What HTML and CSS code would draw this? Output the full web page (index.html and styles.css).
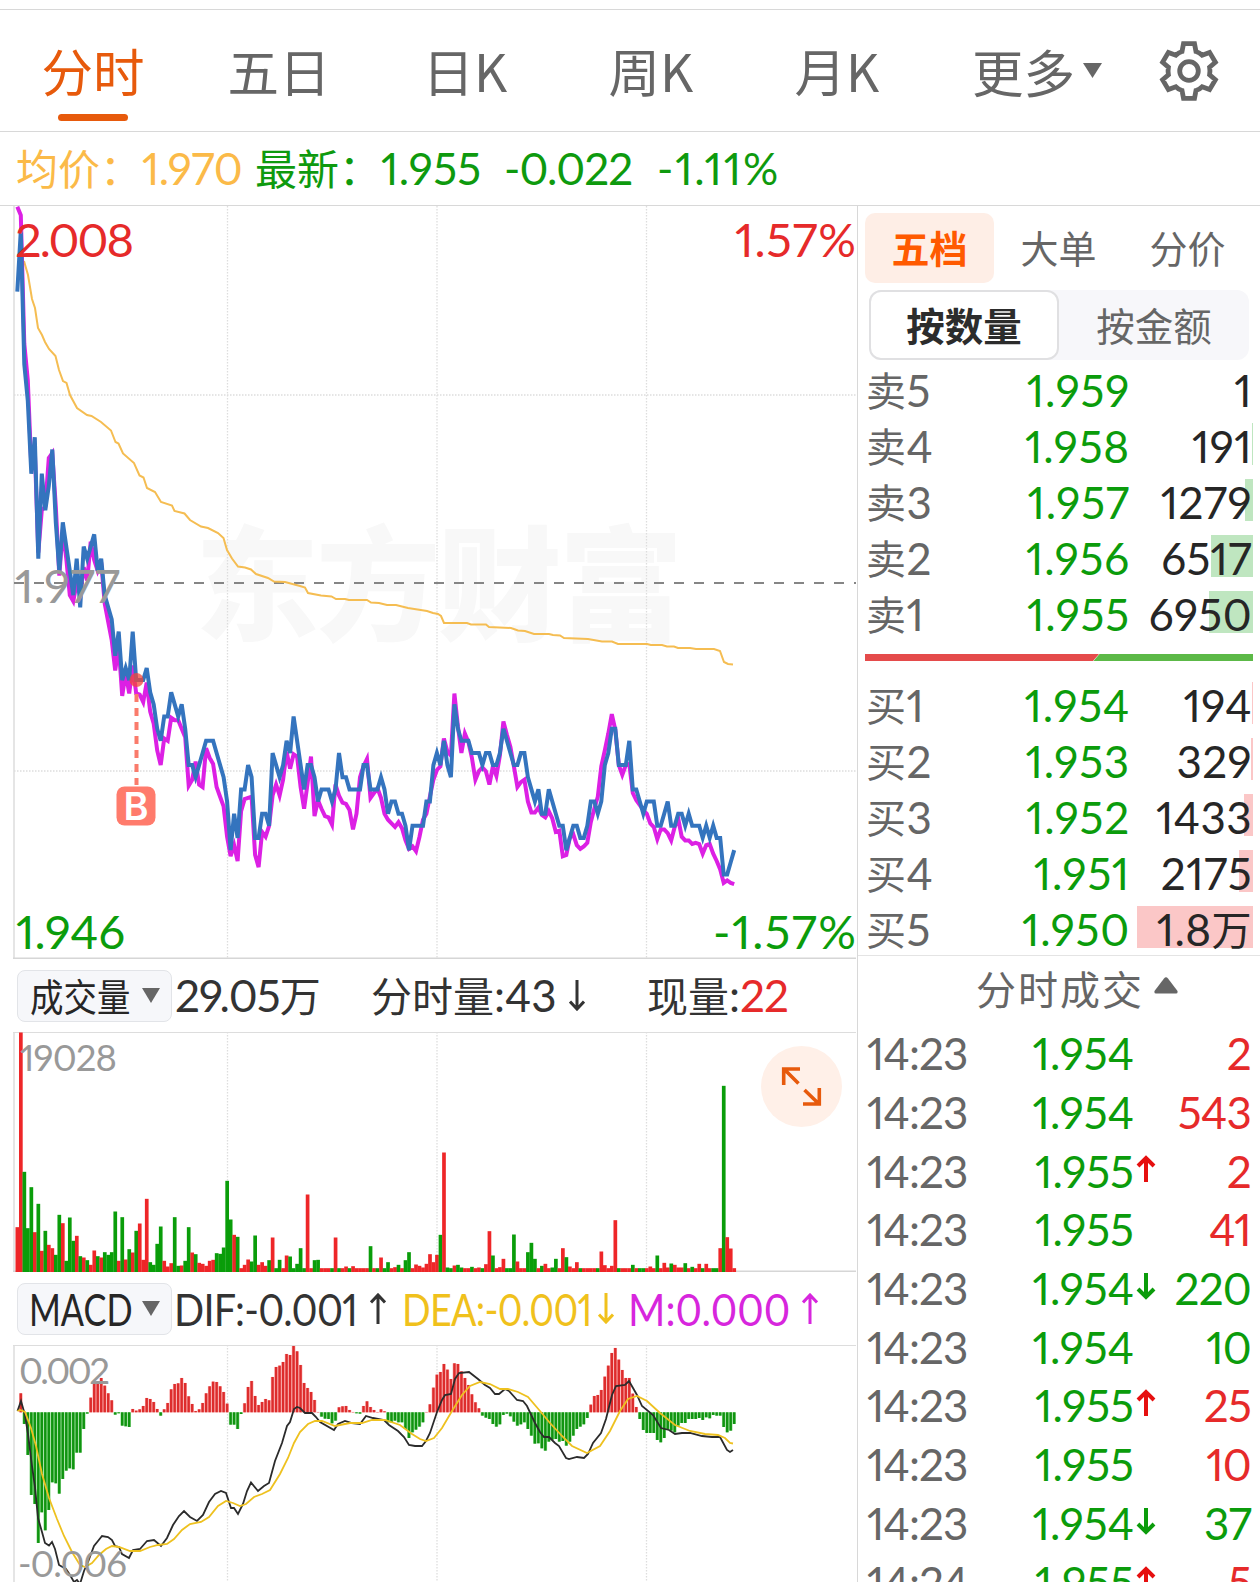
FILE: index.html
```html
<!DOCTYPE html>
<html lang="zh-CN">
<head>
    <meta charset="UTF-8">
    <meta name="viewport" content="width=device-width, initial-scale=1.0">
    <title>分时</title>
    <link rel="stylesheet" href="styles.css">
</head>
<body>
    <nav class="tabs">
        <a class="tab active">分时</a>
        <a class="tab">五日</a>
        <a class="tab">日K</a>
        <a class="tab">周K</a>
        <a class="tab">月K</a>
        <a class="more">更多<svg width="19" height="15"><path d="M0 0H19L9.500 15Z" fill="#666"/></svg></a>
        <svg class="gear" width="60" height="60" viewBox="-30 -30 60 60" fill="none" stroke="#666" stroke-width="4.800">
            <path d="M-5.500 -27.300H5.500L7 -19.500Q10.500 -18.500 13.200 -15.800L20.600 -18.600L26.400 -8.800L20.600 -3.800Q21.300 0 20.600 3.800L26.400 8.800L20.600 18.600L13.200 15.800Q10.500 18.500 7 19.500L5.500 27.300H-5.500L-7 19.500Q-10.500 18.500 -13.200 15.800L-20.600 18.600L-26.400 8.800L-20.600 3.800Q-21.300 0 -20.600 -3.800L-26.400 -8.800L-20.600 -18.600L-13.200 -15.800Q-10.500 -18.500 -7 -19.500Z"/>
            <circle r="9.300"/>
        </svg>
    </nav>

    <div class="quote">
        <span class="avg"><i>均价：</i>1.970</span>
        <span class="last"><i>最新：</i>1.955</span>
        <span class="change">-0.022</span>
        <span class="percent">-1.11%</span>
    </div>

    <div class="main">
        <div class="charts">
            <svg class="chart" width="857" height="753" viewBox="0 206 857 753">
                <text class="watermark" x="195" y="631" textLength="488">东方财富</text>
                <path class="grid" d="M227.500 206V958M437 206V958M646.500 206V958M14 395H856M14 771H856"/>
                <path class="axis" d="M14 206V959"/>
                <path class="axis-bottom" d="M13 958.500H856"/>
                <path class="mid" d="M14 583H856"/>
                <polyline class="avg-line" points="24,261 28,275 32,299 35,308 38,328 42,335 45,342 49,349 55.5,356 59,370 63,381 66.5,383 70,395 77,408 87,415 91.5,416 101,422 111,430.5 115.5,442 118.5,443.5 123,453.5 134,463 139.5,475.5 143.5,477.5 147,488 155,492 161,502 172,505.5 174.5,511 184.5,513.5 190,520 201,526.5 208,528 218,533 223.5,538 227,550 232,558.5 238,566.5 245,567.5 251,569.5 256,574 268,578 274,581.5 285,582 300,586 305,587.5 308,593 321,595.5 331.5,596.5 336,599 345,599 349,600 367,600 371,602.5 379,603 387,605 396,605 408,608 427,611 433,613 438,614 441,616 444,623 467,623 471,624.5 486,624.5 489,627 511,628 518,630.5 525,631 534,634 549,634 553,635 560,635.5 564,638 588,639 602,641.5 612,641.5 618,644 647,644 651,645 662,645 667,646.5 674,646.5 678,648 690,648 696,649 714,649 720,651 724,662 728,664 733,664.5"/>
                <polyline id="index-line" class="index-line"/>
                <polyline id="price-line" class="price-line"/>
                <text class="label up" x="15" y="256.500" textLength="119">2.008</text>
                <text class="label up" x="735" y="256.500" textLength="121">1.57%</text>
                <text class="label flat" x="15" y="602.500" textLength="105">1.977</text>
                <text class="label down" x="16" y="948.500" textLength="109">1.946</text>
                <text class="label down" x="713" y="948.500" textLength="143">-1.57%</text>
                <circle cx="136.500" cy="680" r="7" fill="#f4463a" fill-opacity=".75"/>
                <path class="marker-line" d="M136.500 694V785"/>
                <rect x="116.500" y="786.500" width="39" height="39" rx="8" fill="#ff7b6c"/>
                <text class="marker" x="136" y="820">B</text>
            </svg>

            <div class="bar">
                <div class="pill"><span class="pill-cn">成交量</span><svg width="18" height="15"><path d="M0 0H18L9 15Z" fill="#666"/></svg></div>
                <span class="v-total">29.05<i>万</i></span>
                <span class="v-minute"><i>分时量</i>:43</span>
                <svg class="arrow" width="16" height="31" viewBox="0 0 16 31"><path d="M8 0V29M1 21.500L8 29L15 21.500"/></svg>
                <span class="v-now"><i>现量</i>:<b>22</b></span>
            </div>

            <svg class="chart" width="857" height="240" viewBox="0 1032 857 240">
                <path class="grid" d="M227.500 1032V1271M437 1032V1271M646.500 1032V1271"/>
                <path class="axis" d="M14 1032V1272"/>
                <path class="axis-top" d="M13 1032.500H856"/>
                <path class="axis-bottom" d="M13 1271.500H856"/>
                <g id="volume"></g>
                <text class="small" x="20" y="1071" textLength="97">19028</text>
                <circle cx="801.500" cy="1086.500" r="40.500" fill="#fff0e8"/>
                <path class="expand" d="M783.700 1085V1069H800M784 1069L798.500 1083.500M819.300 1088V1104H803M819 1104L804.500 1090"/>
            </svg>

            <div class="bar">
                <div class="pill"><span class="pill-en">MACD</span><svg width="18" height="15"><path d="M0 0H18L9 15Z" fill="#666"/></svg></div>
                <span class="dif">DIF:-0.001</span>
                <svg class="arrow" width="16" height="31" viewBox="0 0 16 31"><path d="M8 31V2M1 9.500L8 2L15 9.500"/></svg>
                <span class="dea">DEA:-0.001</span>
                <svg class="arrow yellow" width="16" height="31" viewBox="0 0 16 31"><path d="M8 0V29M1 21.500L8 29L15 21.500"/></svg>
                <span class="m">M:0.000</span>
                <svg class="arrow purple" width="16" height="31" viewBox="0 0 16 31"><path d="M8 31V2M1 9.500L8 2L15 9.500"/></svg>
            </div>

            <svg class="chart" width="857" height="237" viewBox="0 1345 857 237">
                <path class="grid" d="M227.500 1345V1582M437 1345V1582M646.500 1345V1582"/>
                <path class="axis" d="M14 1345V1582"/>
                <path class="axis-top" d="M13 1345.500H856"/>
                <g id="macd"></g>
                <polyline class="dif-line" points="17.5,1411 21,1401 25,1415 28,1434 32,1466 35,1487 38,1518 42,1532 45,1543 49,1545.5 52,1542 55,1549 59,1565 66,1569 70,1575 74,1582 77,1580 80,1584 84,1571 88,1562 94,1546 98,1541 102,1536 108,1537 112,1540 115,1546 119,1547 122,1554 129,1558 133,1550 140,1549 147,1541 154,1540 161,1546 167,1538 173,1525 179,1516 184,1511 190,1517 197,1521 203,1515 209,1502 215,1494 221,1491 226,1493 231,1508 234,1508 238,1514 243,1504 247,1491 251,1482.5 258,1491 264,1486 269,1483 275,1461 282,1443 287,1426 290,1422 294,1409 297,1407 300,1408 305,1413 312,1413 316,1417 320,1422 334,1430 338,1424 345,1421 352,1423 360,1424 366,1416 373,1418 384,1420 389,1425 398,1431 404,1437 409,1445 415,1446 422,1446 426,1441 430,1433 437,1412 442,1400 445,1395 451,1394 455,1379 459,1373 469,1372 478,1379 485,1385 490,1388 495,1394 499,1394 505,1389 509,1391 517,1400 523,1401 527,1406 535,1423 540,1432 544,1437 549,1437 555,1443 559,1446 566,1458 569,1459 577,1457 584,1458 588,1454 593,1443 601,1433 606,1419 612,1395 616,1386 625,1385 629,1381 637,1395 642,1406 653,1415 661,1428 669,1430 675,1434 682,1433 690,1433 702,1436 712,1437 720,1437 727,1450 730,1452 733,1450"/>
                <polyline class="dea-line" points="17.5,1411 20,1410 25,1412 31,1428 36,1446 42,1474 49,1498 57,1519 64,1536 72,1552 80,1565 85,1567 92,1563 99,1555 106,1549 112,1546 119,1547 130,1551 140,1551 150,1547 158,1545 167,1544 174,1539 182,1530 190,1524 201,1522 209,1517 218,1506 226,1501 233,1503 240,1506 246,1504 254,1497 262,1494 270,1490 280,1474 288,1458 294,1443 300,1432 308,1424 315,1421 322,1421 335,1426 350,1423 362,1423 372,1420 385,1420 400,1425 412,1434 420,1439 426,1441 434,1438 442,1428 452,1411 462,1395 470,1386 480,1382 490,1384 500,1389 508,1389 518,1392 528,1397 540,1411 550,1423 562,1436 572,1446 587,1453 600,1446 610,1431 620,1411 628,1399 637,1396 647,1401 660,1413 675,1425 690,1431 705,1434 718,1435 725,1438 730,1443 733,1443.5"/>
                <text class="small" x="19" y="1384" textLength="91">0.002</text>
                <text class="small" x="18" y="1577" textLength="109">-0.006</text>
            </svg>
        </div>

        <aside class="side">
            <div class="side-tabs">
                <a class="side-tab active">五档</a>
                <a class="side-tab">大单</a>
                <a class="side-tab">分价</a>
            </div>
            <div class="switch">
                <a class="option active">按数量</a>
                <a class="option">按金额</a>
            </div>
            <div class="book" id="sell"></div>
            <svg class="ratio" width="388" height="7"><path d="M0 0H234L228 7H0Z" fill="#e54b4b"/><path d="M234.500 0H388V7H228.500Z" fill="#5cb947"/></svg>
            <div class="book" id="buy"></div>
            <div class="trades-title">分时成交<svg width="24" height="17"><path d="M10 1.500Q12 -1 14 1.500L23.500 14Q24 16.500 22 16.500H2Q0 16.500 .5 14Z" fill="#666"/></svg></div>
            <div id="trades"></div>
        </aside>
    </div>

    <script src="script.js"></script>
</body>
</html>
```
FILE: styles.css
```css
* {
    box-sizing: border-box;
}
body {
    margin: 0;
    width: 1260px;
    height: 1582px;
    overflow: hidden;
    background-color: #fff;
    font-family: Lato, "Noto Sans CJK SC", sans-serif;
    font-variant-numeric: proportional-nums;
    color: #333;
}
i {
    font-style: normal;
}
svg {
    display: block;
    flex: none;
}
.tabs {
    display: flex;
    align-items: center;
    height: 123px;
    margin-top: 9px;
    border-top: 1px solid #d8d8d8;
    border-bottom: 1px solid #d8d8d8;
}
.tab, .more {
    font-family: "Noto Sans CJK SC", sans-serif;
    font-size: 51.5px;
    line-height: 119px;
    color: #666;
}
.tab {
    position: relative;
    width: 186px;
    height: 121px;
    text-align: center;
}
.tab.active {
    color: #e75a0c;
}
.tab.active::after {
    content: "";
    position: absolute;
    left: 57.5px;
    bottom: 10px;
    width: 70px;
    height: 7px;
    border-radius: 4px;
    background-color: #e75a0c;
}
.more {
    display: flex;
    align-items: center;
    gap: 8px;
    height: 121px;
    margin-left: 42px;
}
.gear {
    margin-left: 57px;
}
.quote {
    display: flex;
    height: 74px;
    padding-left: 16px;
    border-bottom: 1px solid #d8d8d8;
    font-size: 44px;
    line-height: 73px;
    letter-spacing: -0.7px;
    color: #0e9a0e;
    white-space: nowrap;
}
.quote i {
    font-size: 42px;
    letter-spacing: 0;
}
.quote .avg {
    width: 239px;
    color: #fbba48;
}
.quote .last {
    width: 249px;
    letter-spacing: 0.3px;
}
.quote .change {
    width: 153px;
    letter-spacing: -0.9px;
}
.quote .percent {
    letter-spacing: 1.8px;
}
.main {
    display: flex;
    height: 1376px;
}
.charts {
    width: 857px;
}
.grid {
    fill: none;
    stroke: #ddd;
    stroke-width: 1.3;
    stroke-dasharray: 1.5 1.5;
}
.axis, .axis-top, .axis-bottom {
    stroke: #ddd;
    stroke-width: 1.5;
}
.axis-top {
    stroke-width: 1;
}
.axis-bottom {
    stroke: #d6d6d6;
    stroke-width: 2;
}
.mid {
    stroke: #858585;
    stroke-width: 2;
    stroke-dasharray: 10 10;
}
.watermark {
    font-family: "Noto Sans CJK SC", sans-serif;
    font-size: 124px;
    font-weight: 900;
    fill: #f8f8f8;
}
polyline {
    fill: none;
}
.avg-line {
    stroke: #f5bd52;
    stroke-width: 2;
}
.index-line {
    stroke: #dc20e4;
    stroke-width: 4;
}
.price-line {
    stroke: #3474be;
    stroke-width: 4;
}
.dif-line {
    stroke: #2b2b2b;
    stroke-width: 1.8;
}
.dea-line {
    stroke: #eec11f;
    stroke-width: 1.8;
}
.label {
    font-size: 47px;
}
.small {
    font-size: 36.5px;
    fill: #999;
}
.up {
    fill: #e62a2a;
}
.down {
    fill: #0b9c0b;
}
.flat {
    fill: #999;
}
.marker-line {
    stroke: #fa7b6b;
    stroke-width: 4;
    stroke-dasharray: 8 6;
}
.marker {
    font-family: Inter, sans-serif;
    font-size: 38px;
    font-weight: 600;
    fill: #fff;
    text-anchor: middle;
}
.expand {
    fill: none;
    stroke: #e75a0c;
    stroke-width: 3.6;
}
.bar {
    display: flex;
    align-items: center;
    height: 73px;
    padding-left: 17px;
    font-size: 44px;
    line-height: 72px;
    white-space: nowrap;
}
.bar span {
    transform-origin: left;
}
.bar i {
    font-size: 41px;
}
.bar b {
    font-weight: normal;
    letter-spacing: -1px;
    color: #e62a2a;
}
.pill {
    display: flex;
    align-items: center;
    justify-content: space-between;
    width: 155px;
    height: 52px;
    padding: 0 11px 0 12px;
    border: 1px solid #e2e4e8;
    border-radius: 8px;
    background-color: #f6f7fa;
    line-height: 50px;
    color: #262626;
}
.pill span {
    width: 101px;
}
.pill-cn {
    font-size: 38px;
    transform: scaleX(0.88);
}
.pill-en {
    font-size: 44px;
    transform: translateX(-1px) scaleX(0.78);
}
.arrow {
    fill: none;
    stroke: #333;
    stroke-width: 3;
}
.arrow.yellow {
    stroke: #f0c11c;
}
.arrow.purple {
    stroke: #d726dd;
}
.v-total {
    width: 196px;
    margin-left: 3px;
    letter-spacing: -0.9px;
}
.v-minute {
    width: 198px;
}
.v-now {
    margin-left: 62px;
}
.dif {
    width: 196px;
    margin-left: 2px;
    letter-spacing: -0.8px;
    transform: scaleX(0.9);
}
.dea {
    width: 196px;
    margin-left: 16px;
    letter-spacing: -0.8px;
    transform: scaleX(0.855);
    color: #f0c11c;
}
.m {
    width: 174px;
    margin-left: 14px;
    transform: scaleX(0.915);
    color: #d726dd;
}
.side {
    flex: 1;
    padding-left: 7px;
    border-left: 1px solid #d8d8d8;
}
.side-tabs {
    display: flex;
    padding-top: 7px;
}
.side-tab {
    width: 129px;
    height: 70px;
    border-radius: 10px;
    font-size: 38px;
    line-height: 71px;
    text-align: center;
    color: #666;
}
.side-tab.active {
    background-color: #feeee6;
    font-weight: bold;
    color: #ff5a00;
}
.switch {
    display: flex;
    width: 380px;
    height: 70px;
    margin: 7px 0 3px 4px;
    border-radius: 12px;
    background-color: #f7f7fa;
}
.option {
    width: 190px;
    border: 2px solid transparent;
    border-radius: 12px;
    font-size: 38.5px;
    line-height: 69px;
    text-align: center;
    color: #666;
}
.option.active {
    border-color: #e0e0e2;
    background-color: #fff;
    font-weight: bold;
    color: #2c2c2c;
}
.level {
    position: relative;
    display: flex;
    height: 56px;
    font-size: 44px;
    line-height: 54px;
}
.level .name {
    width: 100px;
    padding-left: 1px;
    letter-spacing: 0.5px;
    color: #666;
}
.level .name i {
    font-size: 40px;
    vertical-align: 1px;
}
.level .price {
    width: 165px;
    text-align: right;
    letter-spacing: 0.8px;
    color: #0b9c0b;
}
.level .qty {
    position: relative;
    width: 122px;
    text-align: right;
    letter-spacing: 0.4px;
    color: #262626;
}
.level .qty i {
    font-size: 40px;
    vertical-align: 1px;
}
.level .depth {
    position: absolute;
    top: 4px;
    right: 7px;
    height: 42px;
    background-color: #bfe6c0;
}
#buy .depth {
    background-color: #fbc7c7;
}
.ratio {
    margin: 11px 0 17px;
}
.trades-title {
    display: flex;
    align-items: center;
    gap: 10px;
    height: 68px;
    margin-left: -7px;
    padding-left: 118px;
    font-size: 40px;
    line-height: 64px;
    letter-spacing: 2px;
    color: #666;
}
.trades-title svg {
    margin-top: -9px;
}
#buy {
    height: 278px;
    border-bottom: 1px solid #e4e4e4;
    margin-left: -7px;
    padding-left: 7px;
}
.trade {
    display: flex;
    align-items: center;
    height: 58.7px;
    font-size: 44px;
    line-height: 58px;
}
.trade .time {
    width: 130px;
    padding-left: 2px;
    letter-spacing: -0.9px;
    color: #666;
}
.trade .price {
    width: 139px;
    text-align: right;
    color: #0b9c0b;
}
.trade .dir {
    width: 26px;
    padding-left: 2px;
}
.trade .dir svg {
    margin-top: -4px;
}
.trade .qty {
    width: 91px;
    text-align: right;
    letter-spacing: -0.8px;
}
.trade .buy {
    color: #e62a2a;
}
.trade .sell {
    color: #0b9c0b;
}
```
FILE: script.js
```js
const X0 = 17.3;
const STEP = 3.497;

// offset from the previous close, in ticks (positive is lower)
const price = [
    -24,-29,-18,-15,-9,-12,-2,-9,-6,-8,-11,-5,-1,-5,-3,-1,1,-2,2,-3,-2,-3,-4,-1,-2,1,2,3,6,4,
    8,7,8,4,8,8,8,7,9,10,12,13,11,11,9,10,11,10,12,15,15,16,15,14,13,13,13,14,15,16,
    18,22,19,21,17,17,15,16,21,21,19,19,20,14,15,16,15,13,14,11,13,15,17,15,15,16,18,17,17,17,
    18,17,14,16,16,17,17,17,17,15,15,17,17,17,16,17,19,18,18,19,19,20,22,20,20,20,20,18,18,15,
    14,15,13,15,16,10,12,13,13,13,14,14,14,15,14,14,15,15,14,12,13,14,15,15,14,14,16,17,18,17,
    19,19,17,18,19,20,20,22,21,20,20,21,21,20,18,18,19,18,15,14,12,12,15,15,15,13,17,17,18,19,
    18,18,18,20,20,19,18,20,20,19,19,20,19,20,20,20,21,20,21,20,21,21,24,24,23,22
];

const index = [
    -31,-30.3,-19.7,-16.7,-9.6,-11,-2.5,-6,-6.3,-10.3,-10.7,-6.3,-0.6,-4.4,-2,1,1.5,0,1,-1.3,-0.2,-3.4,-1.9,-1,-1.7,1.7,3.2,4.7,7.2,5.2,
    9.3,7.4,9.1,6.8,9.1,9.2,9.8,8.2,10.6,11.6,13.8,15,12.8,13,11.1,11.3,11.3,12,12.7,16.7,16.2,14.7,16.6,16.8,13.6,14.4,14.9,16.8,17.6,18.4,
    20.9,22.5,21.6,22.9,18.8,17.8,17.7,17.6,22.4,23.4,20.5,20.9,20,17.5,16.6,17.5,16.2,13.9,15.3,14.1,14.3,16.8,18.6,16.5,14.3,19.2,17.9,18.6,19.2,19.3,
    19.9,16.6,17.5,18.1,18.2,18.7,20.3,19,16,15.1,14.5,17.7,17.3,16.9,17.7,19,19.5,19.8,20.1,19.7,20.2,21.2,21.9,21.7,22.1,20.9,19.5,19,17.6,16.2,
    15.4,15.1,12.8,13.9,14.2,9.1,11.8,14,12.4,13.1,14.4,16.2,15.5,15.2,15.5,16.6,15.1,15.9,14.2,11.4,12.5,13.5,15.1,16.8,16.4,16.2,18,18.9,18.9,18.5,
    19.1,19.3,18.8,19.4,20.5,20.4,22.5,22.4,21,20.7,21.6,21.9,21.7,21.4,19.7,18.6,17.6,15.1,13.8,12.4,10.8,12.1,15,15.8,15,14.9,17.3,17.9,18.3,18.7,
    19,19.8,20.1,21.1,20.3,20.3,20.6,21.2,20.1,19.4,20.9,21.2,21.2,21.5,21.4,21.5,22.3,21.6,21.5,22.3,22.9,23.6,24.7,24.5,24.7,24.8
];

// positive is a red bar, negative a green one
const volume = [
    133,717,-299,-130,-253,118,-203,62,-122,80,70,-50,-170,145,-32,-162,-92,107,-46,42,-34,20,63,-46,42,-58,-50,-58,-180,32,
    -163,36,-67,57,-122,144,35,218,-28,-20,-83,-135,32,15,25,-163,-17,18,-32,-133,57,-52,26,23,17,32,35,-55,-53,-72,
    -272,-156,110,-104,10,20,36,-30,-108,20,28,17,-34,102,-10,-35,10,48,-45,-10,-23,-70,-10,231,10,-34,-35,10,10,10,
    -10,102,-10,10,15,-10,16,10,10,10,10,-76,10,-10,42,-10,-28,10,13,-20,10,-34,-58,10,21,17,12,23,52,28,
    50,-110,357,-12,-10,18,-20,-12,10,10,-14,10,12,-10,22,121,-48,10,13,38,-10,-10,-111,30,10,10,-58,-86,-38,10,
    -17,23,10,-12,-38,10,70,-43,15,10,28,-10,10,10,10,10,-10,60,19,10,17,154,-10,10,10,10,-20,10,-10,-10,
    10,15,10,-48,10,26,12,-24,20,12,12,-25,10,-14,10,23,-10,23,10,-10,-10,70,-557,103,69,10
];

const macd = [
    0,57,-35,-128,-248,-275,-392,-300,-354,-293,-210,-213,-244,-200,-175,-168,-171,-121,-121,-50,-4,44,85,85,103,80,57,36,-7,-3,
    -40,-42,-44,10,5,9,19,43,40,31,10,-10,9,28,69,85,87,103,88,48,25,4,9,28,57,78,92,91,78,61,
    26,-37,-37,-50,-5,27,76,94,49,22,31,40,36,106,136,140,151,175,172,199,183,142,88,73,61,37,1,-13,-19,-20,
    -33,-25,15,18,19,7,1,-3,-4,19,33,16,7,1,9,3,-30,-30,-25,-30,-30,-50,-77,-60,-52,-43,-30,1,24,74,
    113,121,145,128,100,147,145,123,103,82,54,30,12,-10,-16,-20,-35,-43,-36,-8,-4,-12,-28,-40,-36,-30,-50,-70,-94,-93,
    -108,-115,-88,-82,-80,-88,-86,-100,-88,-70,-50,-43,-36,-17,23,49,52,67,107,140,178,193,158,127,103,103,56,16,-20,-53,
    -62,-62,-62,-83,-90,-77,-50,-55,-60,-40,-32,-32,-20,-20,-20,-17,-23,-15,-18,-8,-10,-10,-44,-60,-55,-35
];

function drawLine(id, data) {
    const points = data.map((v, i) => `${(X0 + i * STEP).toFixed(1)},${(583 + v * 12.14).toFixed(1)}`);
    document.getElementById(id).setAttribute('points', points.join(' '));
}

function rect(x, y, w, h, color) {
    return `<rect x="${x.toFixed(2)}" y="${y.toFixed(2)}" width="${w}" height="${h.toFixed(2)}" fill="${color}"/>`;
}

drawLine('index-line', index);
drawLine('price-line', price);

document.getElementById('volume').innerHTML = volume.map((v, i) => {
    const h = Math.abs(v) / 3 + 0.5;
    return rect(X0 + i * STEP - 1.8, 1272 - h, 3.7, h, v > 0 ? '#ee2628' : '#0a9d0a');
}).join('');

document.getElementById('macd').innerHTML = macd.map((v, i) => {
    const h = Math.abs(v) / 3;
    const x = X0 + i * STEP;
    const y = v > 0 ? 1412.3 - h : 1412.3;
    return rect(x - 1.75, y, 3.5, h, v > 0 ? '#f9a3a3' : '#8ed88e') +
        rect(x - 1.2, y, 2.4, h, v > 0 ? '#dd2c2c' : '#109410');
}).join('');

const sell = [['5', '1.959', '1', 0], ['4', '1.958', '191', 1], ['3', '1.957', '1279', 8], ['2', '1.956', '6517', 42], ['1', '1.955', '6950', 44]];
const buy = [['1', '1.954', '194', 1], ['2', '1.953', '329', 2], ['3', '1.952', '1433', 9], ['4', '1.951', '2175', 14], ['5', '1.950', '1.8<i>万</i>', 116]];

function drawBook(id, name, rows) {
    document.getElementById(id).innerHTML = rows.map(r => `
        <div class="level">
            <div class="depth" style="width:${r[3]}px"></div>
            <span class="name"><i>${name}</i>${r[0]}</span>
            <span class="price">${r[1]}</span>
            <span class="qty">${r[2]}</span>
        </div>
    `).join('');
}

drawBook('sell', '卖', sell);
drawBook('buy', '买', buy);

const trades = [
    ['14:23', '1.954', '', 2, 'buy'],
    ['14:23', '1.954', '', 543, 'buy'],
    ['14:23', '1.955', 'up', 2, 'buy'],
    ['14:23', '1.955', '', 41, 'buy'],
    ['14:23', '1.954', 'down', 220, 'sell'],
    ['14:23', '1.954', '', 10, 'sell'],
    ['14:23', '1.955', 'up', 25, 'buy'],
    ['14:23', '1.955', '', 10, 'buy'],
    ['14:23', '1.954', 'down', 37, 'sell'],
    ['14:24', '1.955', 'up', 5, 'buy']
];

const arrows = {
    '': '',
    up: '<svg width="20" height="28" fill="none" stroke="#e60f0f" stroke-width="4"><path d="M10 27V3M2 11L10 3L18 11"/></svg>',
    down: '<svg width="20" height="28" fill="none" stroke="#0b9c0b" stroke-width="4"><path d="M10 1V25M2 17L10 25L18 17"/></svg>'
};

document.getElementById('trades').innerHTML = trades.map(t => `
    <div class="trade">
        <span class="time">${t[0]}</span>
        <span class="price">${t[1]}</span>
        <span class="dir">${arrows[t[2]]}</span>
        <span class="qty ${t[4]}">${t[3]}</span>
    </div>
`).join('');
```
